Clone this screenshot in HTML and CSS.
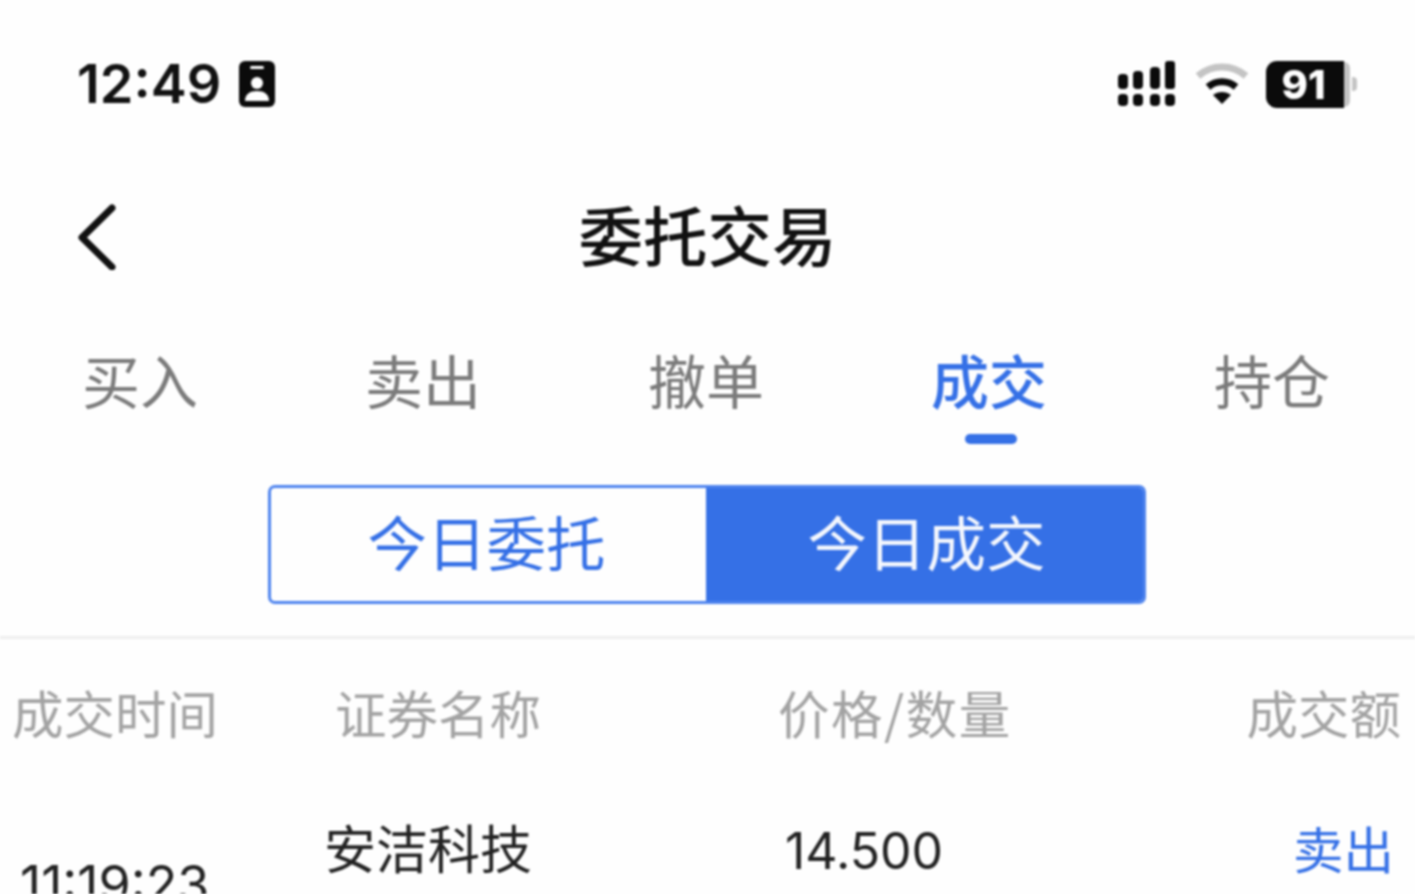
FILE: index.html
```html
<!DOCTYPE html>
<html lang="zh-CN">
<head>
    <meta charset="UTF-8">
    <meta name="viewport" content="width=device-width, initial-scale=1.0">
    <title>委托交易</title>
    <link rel="stylesheet" href="styles.css">
</head>
<body>
    <div class="page">
        <div class="status-bar">
            <div class="status-left">
                <span class="clock">12:49</span>
                <svg class="id-icon" width="36" height="46" viewBox="0 0 36 46">
                    <rect x="0" y="0" width="36" height="46" rx="6" fill="#0b0b0b"/>
                    <rect x="11" y="5" width="14" height="3" rx="1.5" fill="#fff"/>
                    <circle cx="18" cy="22" r="6" fill="#fff"/>
                    <path d="M6 40c0-7 5-10 12-10s12 3 12 10z" fill="#fff"/>
                </svg>
            </div>
            <div class="status-right">
                <svg width="58" height="46" viewBox="0 0 58 46" fill="#0b0b0b">
                    <rect x="1" y="13" width="10" height="15" rx="4"/>
                    <rect x="16" y="10" width="10" height="18" rx="4"/>
                    <rect x="33" y="6" width="10" height="22" rx="4"/>
                    <rect x="48" y="0" width="10" height="28" rx="3"/>
                    <rect x="1" y="33" width="10" height="12" rx="4"/>
                    <rect x="16" y="33" width="10" height="12" rx="4"/>
                    <rect x="33" y="33" width="10" height="12" rx="4"/>
                    <rect x="48" y="33" width="10" height="12" rx="4"/>
                </svg>
                <svg class="wifi" width="54" height="42" viewBox="0 0 54 42" fill="none">
                    <path d="M3 13C17 1 37 1 51 13" stroke="#c4c4c4" stroke-width="7"/>
                    <path d="M13 24C21 17 33 17 41 24" stroke="#0b0b0b" stroke-width="7"/>
                    <path d="M18 32C23 28 31 28 36 32L27 41z" fill="#0b0b0b"/>
                </svg>
                <div class="battery">
                    <span class="battery-body">91</span>
                    <span class="battery-rest"></span>
                    <span class="battery-cap"></span>
                </div>
            </div>
        </div>

        <div class="nav-bar">
            <svg class="back" width="40" height="66" viewBox="0 0 40 66" fill="none">
                <path d="M35 4L5 33.5L35 63" stroke="#111" stroke-width="7" stroke-linecap="round" stroke-linejoin="round"/>
            </svg>
            <h1 class="nav-title">委托交易</h1>
        </div>

        <div class="tabs">
            <div class="tab">买入</div>
            <div class="tab">卖出</div>
            <div class="tab">撤单</div>
            <div class="tab active">成交</div>
            <div class="tab">持仓</div>
        </div>

        <div class="segment">
            <div class="segment-item">今日委托</div>
            <div class="segment-item selected">今日成交</div>
        </div>

        <div class="table-head">
            <span class="col-time">成交时间</span>
            <span class="col-name">证券名称</span>
            <span class="col-price">价格/数量</span>
            <span class="col-amount">成交额</span>
        </div>

        <div class="row">
            <span class="row-time">11:19:23</span>
            <span class="row-name">安洁科技</span>
            <span class="row-price">14.500</span>
            <span class="row-side">卖出</span>
        </div>
    </div>
</body>
</html>
```

FILE: styles.css
```css
html, body {
    margin: 0;
    padding: 0;
    height: 100%;
    overflow: hidden;
    background-color: #fefefe;
}
.page {
    height: 894px;
    overflow: hidden;
    font-family: "Noto Sans CJK SC", Inter, sans-serif;
    color: #111;
    filter: blur(0.8px);
}

/* status bar */
.status-bar {
    display: flex;
    justify-content: space-between;
    align-items: center;
    height: 168px;
    padding: 0 58px 0 77px;
    box-sizing: border-box;
}
.status-left {
    display: flex;
    align-items: center;
    gap: 18px;
}
.clock {
    font-family: Inter, sans-serif;
    font-size: 54px;
    font-weight: 600;
    line-height: 64px;
    color: #111;
}
.status-right {
    display: flex;
    align-items: center;
    gap: 20px;
}
.wifi {
    margin-right: -3px;
}
.battery {
    display: flex;
    align-items: center;
}
.battery-body {
    width: 78px;
    height: 47px;
    padding-right: 3px;
    box-sizing: border-box;
    background-color: #0b0b0b;
    color: #fff;
    border-radius: 11px 0 0 11px;
    font-family: Inter, sans-serif;
    font-size: 40px;
    font-weight: 800;
    line-height: 47px;
    text-align: center;
}
.battery-rest {
    width: 6px;
    height: 45px;
    background-color: #c4c4c4;
    border-radius: 0 9px 9px 0;
}
.battery-cap {
    width: 5px;
    height: 14px;
    margin-left: 2px;
    background-color: #c4c4c4;
    border-radius: 0 4px 4px 0;
}

/* nav */
.nav-bar {
    position: relative;
    display: flex;
    justify-content: center;
    align-items: center;
    height: 136px;
    padding-bottom: 6px;
    box-sizing: border-box;
}
.back {
    position: absolute;
    left: 77px;
    top: 36px;
}
.nav-title {
    margin: 0;
    font-size: 64.5px;
    font-weight: 500;
    line-height: 80px;
    color: #111;
}

/* tabs */
.tabs {
    display: flex;
    height: 109px;
    margin-top: 40px;
    margin-bottom: 32px;
}
.tab {
    flex: 1;
    position: relative;
    padding-right: 3px;
    text-align: center;
    font-size: 58px;
    line-height: 70px;
    color: #7b7b7b;
}
.tab.active {
    color: #3570e6;
    font-weight: 500;
}
.tab.active::after {
    content: "";
    position: absolute;
    left: 50%;
    bottom: 9px;
    width: 52px;
    height: 10px;
    margin-left: -26px;
    background-color: #3570e6;
    border-radius: 5px;
}

/* segment */
.segment {
    display: flex;
    width: 878px;
    height: 119px;
    margin-left: 268px;
    box-sizing: border-box;
    border: 3px solid #4d83ee;
    border-radius: 7px;
    overflow: hidden;
}
.segment-item {
    flex: 1;
    padding-right: 4px;
    text-align: center;
    font-size: 59.5px;
    line-height: 105px;
    color: #3570e6;
}
.segment-item.selected {
    flex: 0 0 437px;
    padding-left: 4px;
    padding-right: 0;
    box-sizing: border-box;
    background-color: #3570e6;
    color: #f4f7fd;
}

/* table */
.table-head {
    position: relative;
    height: 100px;
    margin-top: 32px;
    border-top: 3px solid #eeeeee;
    font-size: 51.5px;
    line-height: 146px;
    color: #a3a3a3;
}
.table-head span,
.row span {
    position: absolute;
    white-space: nowrap;
}
.col-time { left: 12px; }
.col-name { left: 335px; }
.col-price { left: 778px; letter-spacing: 1.5px; }
.col-amount { right: 14px; }

.row {
    position: relative;
    font-size: 52px;
    color: #222;
}
.row-time {
    left: 20px;
    top: 116px;
    font-family: Inter, sans-serif;
    font-size: 52px;
    line-height: 60px;
}
.row-name {
    left: 324px;
    top: 70px;
    line-height: 76px;
}
.row-price {
    left: 785px;
    top: 82px;
    font-family: Inter, sans-serif;
    font-size: 50px;
    line-height: 60px;
}
.row-side {
    right: 21px;
    top: 70px;
    line-height: 76px;
    font-size: 50.5px;
    color: #3570e6;
}
```
